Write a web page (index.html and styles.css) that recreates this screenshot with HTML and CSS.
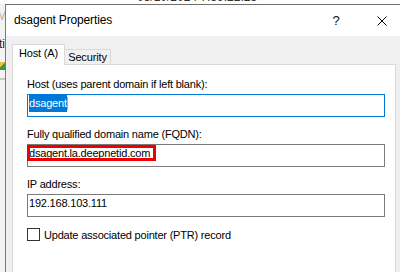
FILE: index.html
```html
<!DOCTYPE html>
<html>
<head>
<meta charset="utf-8">
<link rel="stylesheet" href="styles.css">
</head>
<body>
<div class="screen">
  <div class="bg-top"><span class="bg-time">05/10/2024 7:39:22:23</span></div>
  <div class="main">
    <div class="bg-left">
      <span class="frag-m">M</span>
      <span class="frag-ti">ti</span>
      <span class="frag-icon"></span>
      <span class="frag-bar"></span>
    </div>
    <div class="dialog">
      <div class="titlebar">
        <span class="title">dsagent Properties</span>
        <span class="cap-btn help">?</span>
        <span class="cap-btn close">
          <svg width="10" height="10" viewBox="0 0 10 10"><path d="M0.5 0.5L9.5 9.5M9.5 0.5L0.5 9.5" stroke="#000" stroke-width="1" fill="none"/></svg>
        </span>
      </div>
      <div class="body">
        <div class="tabs">
          <div class="tab active">Host (A)</div>
          <div class="tab">Security</div>
        </div>
        <div class="panel">
          <div class="field">
            <div class="label">Host (uses parent domain if left blank):</div>
            <div class="input focused"><span class="sel">dsagent</span><span class="caret"></span></div>
          </div>
          <div class="field">
            <div class="label">Fully qualified domain name (FQDN):</div>
            <div class="input"><span class="mark"></span>dsagent.la.deepnetid.com</div>
          </div>
          <div class="field">
            <div class="label">IP address:</div>
            <div class="input">192.168.103.111</div>
          </div>
          <div class="check">
            <span class="box"></span>
            <span class="check-label">Update associated pointer (PTR) record</span>
          </div>
        </div>
      </div>
    </div>
  </div>
</div>
</body>
</html>
```

FILE: styles.css
```css
html, body {
  margin: 0;
  padding: 0;
  background: #ffffff;
}

.screen {
  width: 400px;
  height: 272px;
  overflow: hidden;
  font-family: "Liberation Sans", Arial, sans-serif;
  color: #000;
}

.bg-top {
  height: 4px;
  overflow: hidden;
  background: #ffffff;
  padding-left: 137px;
}

.bg-time {
  display: block;
  font-size: 12px;
  line-height: 12px;
  margin-top: -9px;
  color: #333;
  white-space: nowrap;
}

.main {
  display: flex;
  height: 268px;
}

.bg-left {
  width: 5px;
  flex: none;
  background: #f3f3f3;
  display: flex;
  flex-direction: column;
  overflow: hidden;
}

.frag-m {
  font-size: 12px;
  line-height: 12px;
  color: #b0b0b0;
  margin-top: 6px;
  margin-left: -3px;
}

.frag-ti {
  font-size: 12px;
  line-height: 12px;
  color: #222;
  margin-top: 16px;
  margin-left: -1px;
}

.frag-icon {
  width: 5px;
  height: 8px;
  margin-top: 12px;
  background: linear-gradient(135deg, #e9c247 0 40%, #3d9a3a 40% 100%);
}

.frag-bar {
  width: 5px;
  height: 2px;
  margin-top: 8px;
  background: #c8c8c8;
}

.dialog {
  width: 399px;
  flex: none;
  border-left: 1px solid #7a7a7a;
  border-top: 1px solid #6e6e6e;
  background: #f0f0f0;
  display: flex;
  flex-direction: column;
}

.titlebar {
  height: 31px;
  background: #ffffff;
  display: flex;
  align-items: center;
}

.title {
  font-size: 12px;
  letter-spacing: -0.15px;
  margin-left: 8px;
  flex: 1;
  padding-bottom: 1px;
}

.cap-btn {
  width: 46px;
  height: 31px;
  display: flex;
  align-items: center;
  justify-content: center;
}

.help {
  font-size: 13px;
  color: #111;
  padding-bottom: 1px;
}

.body {
  flex: 1;
  padding-top: 8px;
  padding-left: 6px;
}

.tabs {
  display: flex;
  align-items: flex-end;
  height: 20px;
}

.tab {
  box-sizing: border-box;
  font-size: 11px;
  letter-spacing: -0.15px;
  text-align: center;
  border: 1px solid #d9d9d9;
  border-bottom: none;
}

.tab.active {
  width: 53px;
  height: 21px;
  line-height: 17px;
  background: #ffffff;
  margin-bottom: -1px;
  position: relative;
  z-index: 1;
}

.tab:not(.active) {
  width: 46px;
  height: 15px;
  line-height: 14px;
  border-left: none;
  background: #f0f0f0;
}

.panel {
  box-sizing: border-box;
  width: 384px;
  height: 250px;
  background: #ffffff;
  border: 1px solid #d9d9d9;
  padding: 13px 0 0 14px;
}

.field {
  margin-bottom: 11px;
}

.label {
  font-size: 11px;
  line-height: 13px;
  letter-spacing: -0.2px;
  margin-bottom: 3px;
  white-space: nowrap;
}

.input {
  position: relative;
  box-sizing: border-box;
  width: 358px;
  height: 23px;
  border: 1px solid #7a7a7a;
  padding-left: 1px;
  font-size: 11px;
  line-height: 17px;
  letter-spacing: -0.2px;
  white-space: nowrap;
  display: flex;
  align-items: flex-start;
}

.input.focused {
  border-color: #0078d7;
}

.sel {
  background: #0078d7;
  color: #ffffff;
  margin-top: 0;
}

.caret {
  width: 1px;
  height: 13px;
  margin-top: 2px;
  background: #e8a040;
}

.mark {
  position: absolute;
  left: -1px;
  top: 0;
  width: 129px;
  height: 16px;
  box-sizing: border-box;
  border: 3px solid #ee0000;
}

.check {
  margin-top: 2px;
  display: flex;
  align-items: center;
  height: 13px;
}

.box {
  box-sizing: border-box;
  width: 13px;
  height: 13px;
  border: 1px solid #333333;
  background: #ffffff;
  flex: none;
}

.check-label {
  font-size: 11px;
  letter-spacing: -0.2px;
  margin-left: 4px;
  white-space: nowrap;
}
```
